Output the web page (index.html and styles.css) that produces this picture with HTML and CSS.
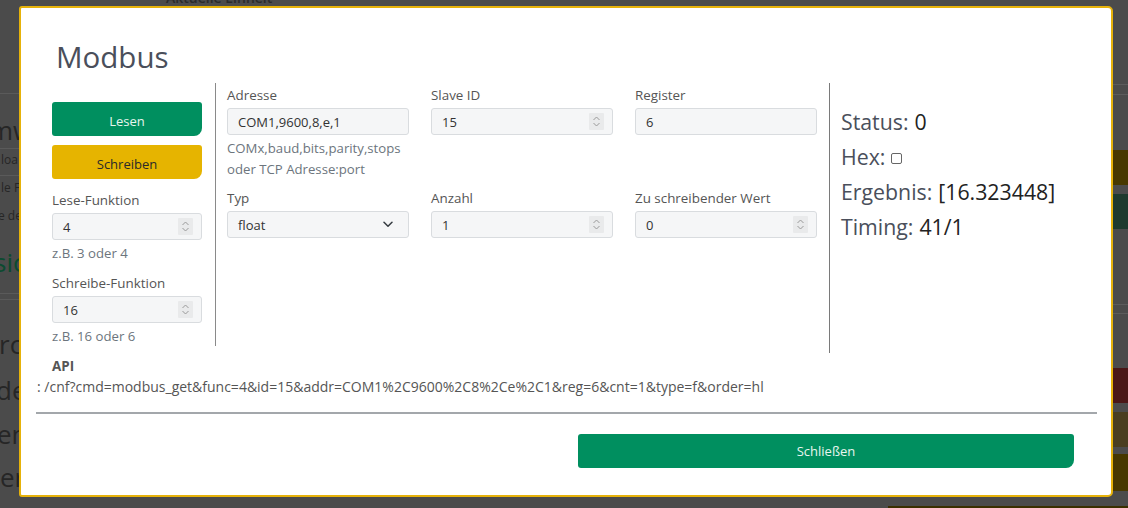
FILE: index.html
```html
<!DOCTYPE html>
<html lang="de">
<head>
<meta charset="utf-8">
<title>Modbus</title>
<link rel="stylesheet" href="styles.css">
</head>
<body>
<div class="bg-page">
  <div class="bg-top">Aktuelle Einheit</div>
  <div class="bg-grid">
    <div class="bg-left">
      <div class="bg-line l1"></div>
      <div class="bg-big t1">mw</div>
      <div class="bg-line l2"></div>
      <div class="bg-small t2">loa</div>
      <div class="bg-line l3"></div>
      <div class="bg-small t3">le F</div>
      <div class="bg-small t4">e de</div>
      <div class="bg-big green t5">sic</div>
      <div class="bg-line l4"></div>
      <div class="bg-line l5"></div>
      <div class="bg-big t6">rc</div>
      <div class="bg-big t7">de</div>
      <div class="bg-big t8">ens</div>
      <div class="bg-big t9">er</div>
    </div>
    <div class="bg-right">
      <div class="bg-rline r1"></div>
      <div class="bg-rline r2"></div>
      <div class="bg-bar yellow r3"></div>
      <div class="bg-bar green r4"></div>
      <div class="bg-rline r5"></div>
      <div class="bg-rline r6"></div>
      <div class="bg-bar red r7"></div>
      <div class="bg-bar olive r8"></div>
      <div class="bg-bar yellow r9"></div>
      <div class="bg-bar yellow2 r10"></div>
    </div>
  </div>
</div>

<div class="modal">
  <h2 class="modal-title">Modbus</h2>
  <div class="modal-row">
    <div class="col-left">
      <button class="btn btn-green">Lesen</button>
      <button class="btn btn-yellow">Schreiben</button>
      <div class="field first">
        <div class="label">Lese-Funktion</div>
        <div class="input">
          <span>4</span>
          <svg class="spin" viewBox="0 0 15 17" width="15" height="17"><rect width="15" height="17" rx="1" fill="#e9eaeb"/><path d="M4.5 7 L7.5 4 L10.5 7" fill="none" stroke="#9a9a9a" stroke-width="1"/><path d="M4.5 10 L7.5 13 L10.5 10" fill="none" stroke="#9a9a9a" stroke-width="1"/></svg>
        </div>
        <div class="help">z.B. 3 oder 4</div>
      </div>
      <div class="field">
        <div class="label">Schreibe-Funktion</div>
        <div class="input">
          <span>16</span>
          <svg class="spin" viewBox="0 0 15 17" width="15" height="17"><rect width="15" height="17" rx="1" fill="#e9eaeb"/><path d="M4.5 7 L7.5 4 L10.5 7" fill="none" stroke="#9a9a9a" stroke-width="1"/><path d="M4.5 10 L7.5 13 L10.5 10" fill="none" stroke="#9a9a9a" stroke-width="1"/></svg>
        </div>
        <div class="help">z.B. 16 oder 6</div>
      </div>
    </div>

    <div class="col-mid">
      <div class="field">
        <div class="label">Adresse</div>
        <div class="input"><span>COM1,9600,8,e,1</span></div>
        <div class="help">COMx,baud,bits,parity,stops<br>oder TCP Adresse:port</div>
      </div>
      <div class="field">
        <div class="label">Slave ID</div>
        <div class="input">
          <span>15</span>
          <svg class="spin" viewBox="0 0 15 17" width="15" height="17"><rect width="15" height="17" rx="1" fill="#e9eaeb"/><path d="M4.5 7 L7.5 4 L10.5 7" fill="none" stroke="#9a9a9a" stroke-width="1"/><path d="M4.5 10 L7.5 13 L10.5 10" fill="none" stroke="#9a9a9a" stroke-width="1"/></svg>
        </div>
      </div>
      <div class="field">
        <div class="label">Register</div>
        <div class="input"><span>6</span></div>
      </div>
      <div class="field">
        <div class="label">Typ</div>
        <div class="input select">
          <span>float</span>
          <svg class="chev" viewBox="0 0 10 7" width="10" height="7"><path d="M1 1.2 L5 5.2 L9 1.2" fill="none" stroke="#343a40" stroke-width="1.5" stroke-linecap="round" stroke-linejoin="round"/></svg>
        </div>
      </div>
      <div class="field">
        <div class="label">Anzahl</div>
        <div class="input">
          <span>1</span>
          <svg class="spin" viewBox="0 0 15 17" width="15" height="17"><rect width="15" height="17" rx="1" fill="#e9eaeb"/><path d="M4.5 7 L7.5 4 L10.5 7" fill="none" stroke="#9a9a9a" stroke-width="1"/><path d="M4.5 10 L7.5 13 L10.5 10" fill="none" stroke="#9a9a9a" stroke-width="1"/></svg>
        </div>
      </div>
      <div class="field">
        <div class="label">Zu schreibender Wert</div>
        <div class="input">
          <span>0</span>
          <svg class="spin" viewBox="0 0 15 17" width="15" height="17"><rect width="15" height="17" rx="1" fill="#e9eaeb"/><path d="M4.5 7 L7.5 4 L10.5 7" fill="none" stroke="#9a9a9a" stroke-width="1"/><path d="M4.5 10 L7.5 13 L10.5 10" fill="none" stroke="#9a9a9a" stroke-width="1"/></svg>
        </div>
      </div>
    </div>

    <div class="col-right">
      <div class="stat"><span class="k">Status:</span> <span class="v">0</span></div>
      <div class="stat"><span class="k">Hex:</span> <span class="check"></span></div>
      <div class="stat"><span class="k">Ergebnis:</span> <span class="v">[16.323448]</span></div>
      <div class="stat"><span class="k">Timing:</span> <span class="v">41/1</span></div>
    </div>
  </div>

  <div class="api-label">API</div>
  <div class="api-url">: /cnf?cmd=modbus_get&amp;func=4&amp;id=15&amp;addr=COM1%2C9600%2C8%2Ce%2C1&amp;reg=6&amp;cnt=1&amp;type=f&amp;order=hl</div>
  <div class="divider"></div>
  <div class="modal-footer">
    <button class="btn btn-green btn-close">Schließen</button>
  </div>
</div>
</body>
</html>
```

FILE: styles.css
```css
* { box-sizing: border-box; }

html, body {
  margin: 0;
  padding: 0;
  width: 1128px;
  height: 508px;
  overflow: hidden;
}

body {
  background: #4b4b4b;
  font-family: "Open Sans", "Noto Sans", sans-serif;
  position: relative;
}

/* ---------- dimmed page behind the dialog ---------- */
.bg-page {
  color: #222;
}

.bg-top {
  margin: -9px 0 0 166px;
  height: 14px;
  font-size: 14px;
  line-height: 14px;
  font-weight: 600;
  color: #2a2a2a;
}

.bg-grid {
  display: grid;
  grid-template-columns: 885px 243px;
}

.bg-left {
  overflow: hidden;
}

.bg-line {
  height: 1px;
  background: #5a5a5a;
}
.l1 { margin-top: 88px; }
.l2 { margin-top: 3px; }
.l3 { margin-top: 7px; }
.l4 { margin-top: 16px; }
.l5 { margin-top: 5px; }

.bg-big {
  font-size: 26px;
  line-height: 30px;
  color: #262626;
  white-space: nowrap;
}
.bg-small {
  font-size: 12px;
  line-height: 16px;
  color: #262626;
  white-space: nowrap;
}
.bg-big.green { color: #0c4a30; }

.t1 { margin-top: 21px; margin-left: -11px; }
.t2 { margin-top: 3px; margin-left: 1px; }
.t3 { margin-top: 4px; margin-left: 1px; }
.t4 { margin-top: 12px; margin-left: -2px; }
.t5 { margin-top: 23px; margin-left: -6px; }
.t6 { margin-top: 29px; margin-left: -1px; }
.t7 { margin-top: 16px; margin-left: -4px; }
.t8 { margin-top: 14px; margin-left: -3px; }
.t9 { margin-top: 13px; margin-left: 0; }

.bg-rline {
  height: 1px;
  background: #5c5c5c;
}
.r1 { margin-top: 79px; }
.r2 { margin-top: 9px; }
.r5 { margin-top: 75px; }
.r6 { margin-top: 8px; }

.bg-bar { height: 35px; }
.bg-bar.yellow { background: #473800; }
.bg-bar.yellow2 { background: #3a2f00; height: 10px; margin-left: 3px; }
.bg-bar.green { background: #1f3a2e; }
.bg-bar.red { background: #4a1717; }
.bg-bar.olive { background: #4a3e20; }
.r3 { margin-top: 55px; }
.r4 { margin-top: 9px; }
.r7 { margin-top: 54px; }
.r8 { margin-top: 9px; }
.r9 { margin-top: 7px; height: 37px; }
.r10 { margin-top: 15px; }

/* ---------- dialog ---------- */
.modal {
  position: absolute;
  left: 19px;
  top: 6px;
  width: 1094px;
  height: 491px;
  background: #fff;
  border: 2px solid #e6b20a;
  border-radius: 3px 5px 5px 3px;
  color: #444;
}

.modal-title {
  margin: 0;
  padding: 30px 0 0 35px;
  height: 75px;
  font-size: 29.5px;
  line-height: 37px;
  font-weight: 400;
  color: #4a4f5b;
}

.modal-row {
  display: flex;
  align-items: flex-start;
  margin-left: 31px;
  height: 270px;
}

.label {
  font-size: 13.4px;
  line-height: 18px;
  color: #555;
  white-space: nowrap;
}

.input {
  margin-top: 4px;
  height: 27px;
  display: flex;
  align-items: center;
  justify-content: space-between;
  padding: 0 8px 0 10px;
  background: #f5f6f7;
  border: 1px solid #d9dcdf;
  border-radius: 3px;
  font-size: 13px;
  color: #333;
}

.input.select { padding-right: 15px; }

.help {
  margin-top: 3px;
  font-size: 13.2px;
  line-height: 21px;
  color: #6c757d;
  white-space: nowrap;
}

/* left column */
.col-left {
  width: 150px;
  padding-top: 19px;
  display: flex;
  flex-direction: column;
}

.btn {
  display: block;
  width: 100%;
  height: 34px;
  border: none;
  border-radius: 3px 3px 8px 3px;
  font-family: inherit;
  font-size: 13px;
  padding: 3px 0 0;
  cursor: pointer;
}
.btn-green { background: #008f5f; color: #e8f5ee; }
.btn-yellow { background: #e6b400; color: #2a2a2a; margin-top: 9px; }

.col-left .field.first { margin-top: 12px; }
.col-left .field + .field { margin-top: 10px; }

/* middle column */
.col-mid {
  margin-left: 13px;
  padding: 3px 12px 0 11px;
  height: 263px;
  border-left: 1px solid #8a8a8a;
  display: grid;
  grid-template-columns: repeat(3, 182px);
  grid-template-rows: auto auto;
  column-gap: 22px;
  row-gap: 9px;
  align-content: start;
  width: 614px;
}

/* right column */
.col-right {
  height: 270px;
  border-left: 1px solid #7a7a7a;
  padding: 21px 0 0 11px;
}

.stat {
  font-size: 21.3px;
  line-height: 35px;
  display: flex;
  align-items: center;
  gap: 6px;
  white-space: nowrap;
}
.stat .k { color: #4a4f5b; }
.stat .v { color: #222; }

.check {
  display: inline-block;
  width: 11px;
  height: 11px;
  border: 1px solid #666;
  border-radius: 2px;
  margin-top: 3px;
  background: #fff;
}

/* api */
.api-label {
  margin: 4px 0 0 31px;
  font-size: 13.4px;
  line-height: 18px;
  font-weight: 700;
  color: #555;
}
.api-url {
  margin: 3px 0 0 16px;
  font-size: 14px;
  line-height: 18px;
  color: #555;
  white-space: nowrap;
}

.divider {
  margin: 16px 14px 0 15px;
  height: 2px;
  background: #a3a7ab;
}

.modal-footer {
  display: flex;
  justify-content: flex-end;
  padding: 20px 37px 0 0;
}

.btn-close {
  width: 496px;
  height: 34px;
  padding-top: 0;
}
```
